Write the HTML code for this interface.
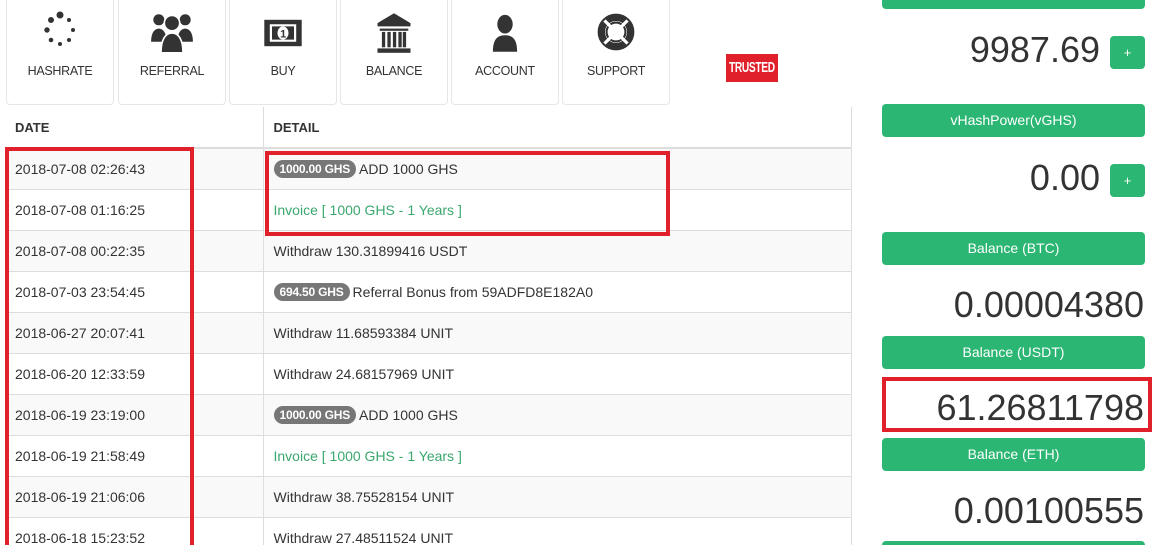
<!DOCTYPE html>
<html><head><meta charset="utf-8"><style>
*{box-sizing:border-box;margin:0;padding:0}
html,body{width:1152px;height:545px;overflow:hidden}
body{background:#fff;font-family:"Liberation Sans",sans-serif;color:#333;position:relative}
.tile{position:absolute;top:-5px;height:110px;width:108px;border:1px solid #e6e6e6;border-radius:4px;background:#fff;text-align:center;font-size:12.5px;letter-spacing:-0.3px}
.tile svg{position:absolute;left:50%;top:15px;transform:translateX(-50%)}
.tile span{position:absolute;left:0;right:0;top:68px}
.tbl{position:absolute;left:5px;top:107px;width:847px;border-collapse:collapse;font-size:14px}
.tbl td,.tbl th{height:41px;padding:0 10px;border-top:1px solid #ddd;text-align:left;vertical-align:middle}
.tbl th{font-size:13px;font-weight:bold;border-top:none;border-bottom:2px solid #ddd}
.tbl td:first-child,.tbl th:first-child{width:258px;border-right:1px solid #ddd}
.tbl tr:nth-child(even) td{background:#f9f9f9}
.tbl{border-right:1px solid #ddd}
.b{display:inline-block;vertical-align:1px;background:#777;color:#fff;font-size:12px;font-weight:bold;border-radius:10px;padding:2px 6px;margin-right:3px;letter-spacing:-0.2px}
.g{color:#3aa76d}
.btn{position:absolute;left:882px;width:263px;height:33px;background:#2bb673;border-radius:4px;color:#fff;font-size:14px;text-align:center;line-height:33px}
.num{position:absolute;font-size:36px;color:#333;line-height:40px}
.plus{position:absolute;left:1110px;width:35px;height:33px;background:#2bb673;border-radius:4px;color:#fff;font-size:13px;text-align:center;line-height:33px}
.red{position:absolute;border:4px solid #e0202a}
</style></head><body>
<div class="tile" style="left:6px"><svg width="40" height="40" viewBox="0 0 36 40"><g fill="#333"><circle cx="18" cy="4" r="3.5"/><circle cx="9" cy="9" r="3"/><circle cx="27" cy="9" r="2"/><circle cx="5" cy="19" r="2.7"/><circle cx="31" cy="19" r="2"/><circle cx="9" cy="29" r="2.3"/><circle cx="27" cy="29" r="2"/><circle cx="18" cy="33" r="2"/></g></svg><span>HASHRATE</span></div>
<div class="tile" style="left:118px"><svg width="44" height="44" viewBox="0 0 40 40"><g fill="#333"><circle cx="8" cy="8" r="5"/><circle cx="32" cy="8" r="5"/><path d="M1 28c0-8 3-12 7-12s7 4 7 12z"/><path d="M25 28c0-8 3-12 7-12s7 4 7 12z"/><circle cx="20" cy="11" r="7" stroke="#fff" stroke-width="1.5"/><path d="M10 38c0-12 4-18 10-18s10 6 10 18z" stroke="#fff" stroke-width="1.5"/></g></svg><span>REFERRAL</span></div>
<div class="tile" style="left:229px"><svg width="44" height="44" viewBox="0 0 40 40"><rect x="3" y="8" width="34" height="24" fill="#333"/><path d="M8 12h24v16H8z" fill="#fff"/><path d="M10 14h20v12H10z" fill="#333"/><ellipse cx="20" cy="20" rx="5" ry="6" fill="#fff"/><text x="20" y="24" font-size="10" font-weight="bold" text-anchor="middle" fill="#333" font-family="Liberation Sans">1</text></svg><span>BUY</span></div>
<div class="tile" style="left:340px"><svg width="44" height="44" viewBox="0 0 40 40"><g fill="#333"><path d="M20 2L5 11v3h30v-3z"/><rect x="7" y="16" width="26" height="2"/><rect x="9" y="19" width="3" height="14"/><rect x="14" y="19" width="3" height="14"/><rect x="19" y="19" width="3" height="14"/><rect x="24" y="19" width="3" height="14"/><rect x="28" y="19" width="3" height="14"/><rect x="5" y="34" width="30" height="4"/></g></svg><span>BALANCE</span></div>
<div class="tile" style="left:451px"><svg width="44" height="44" viewBox="0 0 40 40"><g fill="#333"><ellipse cx="20" cy="12" rx="7" ry="8.5"/><path d="M9 37c0-10 3-15 11-15s11 5 11 15z"/></g></svg><span>ACCOUNT</span></div>
<div class="tile" style="left:562px"><svg width="42" height="42" viewBox="0 0 40 40"><circle cx="20" cy="20" r="14" fill="none" stroke="#333" stroke-width="7"/><circle cx="20" cy="20" r="9" fill="none" stroke="#333" stroke-width="2"/><g stroke="#fff" stroke-width="3"><path d="M9 9l6 6M31 9l-6 6M9 31l6-6M31 31l-6-6"/></g></svg><span>SUPPORT</span></div>
<div style="position:absolute;left:726px;top:54px;width:52px;height:28px;background:#e0202a;overflow:hidden"><div style="color:#fff;font-weight:bold;font-size:15px;line-height:28px;white-space:nowrap;transform:scaleX(0.68);transform-origin:0 0;width:76px;text-align:center;letter-spacing:-0.5px">TRUSTED</div></div>

<table class="tbl">
<tr><th>DATE</th><th>DETAIL</th></tr>
<tr><td>2018-07-08 02:26:43</td><td><span class="b">1000.00 GHS</span>ADD 1000 GHS</td></tr>
<tr><td>2018-07-08 01:16:25</td><td class="g">Invoice [ 1000 GHS - 1 Years ]</td></tr>
<tr><td>2018-07-08 00:22:35</td><td>Withdraw 130.31899416 USDT</td></tr>
<tr><td>2018-07-03 23:54:45</td><td><span class="b">694.50 GHS</span>Referral Bonus from 59ADFD8E182A0</td></tr>
<tr><td>2018-06-27 20:07:41</td><td>Withdraw 11.68593384 UNIT</td></tr>
<tr><td>2018-06-20 12:33:59</td><td>Withdraw 24.68157969 UNIT</td></tr>
<tr><td>2018-06-19 23:19:00</td><td><span class="b">1000.00 GHS</span>ADD 1000 GHS</td></tr>
<tr><td>2018-06-19 21:58:49</td><td class="g">Invoice [ 1000 GHS - 1 Years ]</td></tr>
<tr><td>2018-06-19 21:06:06</td><td>Withdraw 38.75528154 UNIT</td></tr>
<tr><td style="height:28px;vertical-align:top;padding-top:12px">2018-06-18 15:23:52</td><td style="height:28px;vertical-align:top;padding-top:12px">Withdraw 27.48511524 UNIT</td></tr>
</table>

<div class="btn" style="top:-24px"></div>
<div class="num" style="right:52px;top:30px">9987.69</div><div class="plus" style="top:36px">+</div>
<div class="btn" style="top:104px">vHashPower(vGHS)</div>
<div class="num" style="right:52px;top:158px">0.00</div><div class="plus" style="top:164px">+</div>
<div class="btn" style="top:232px">Balance (BTC)</div>
<div class="num" style="right:8px;top:285px">0.00004380</div>
<div class="btn" style="top:336px">Balance (USDT)</div>
<div class="num" style="right:8px;top:388px">61.26811798</div>
<div class="btn" style="top:438px">Balance (ETH)</div>
<div class="num" style="right:8px;top:491px">0.00100555</div>
<div class="btn" style="top:541px;height:4px;border-radius:4px 4px 0 0"></div>

<div class="red" style="left:5px;top:147px;width:189px;height:398px;border-bottom:none"></div>
<div class="red" style="left:265px;top:151px;width:405px;height:85px"></div>
<div class="red" style="left:882px;top:377px;width:270px;height:55px"></div>
</body></html>
